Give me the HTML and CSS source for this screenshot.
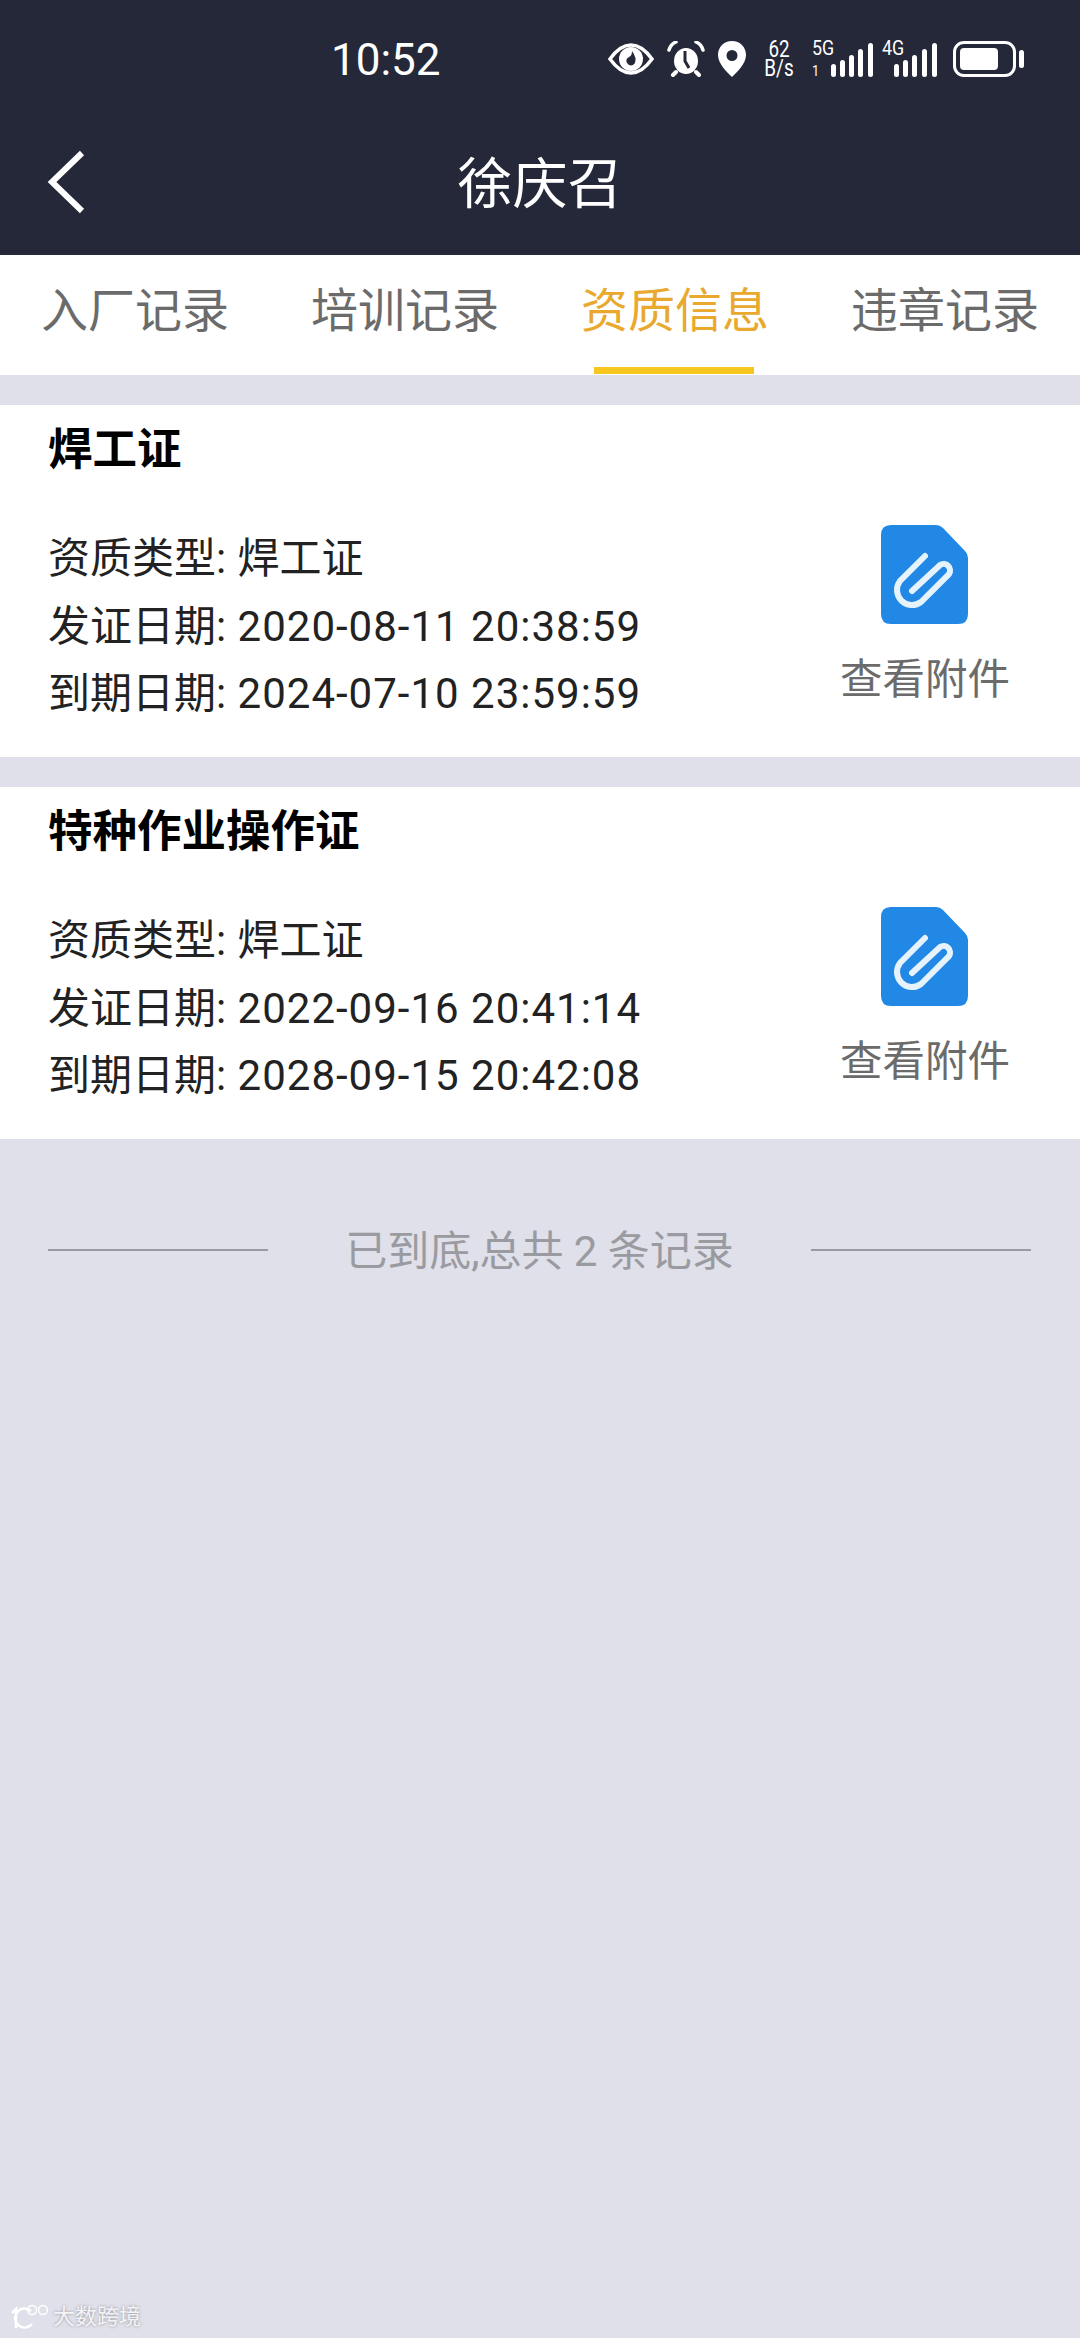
FILE: index.html
```html
<!DOCTYPE html>
<html lang="en">
<head>
    <meta charset="UTF-8">
    <title>徐庆召</title>
    <link rel="stylesheet" href="styles.css">
</head>
<body>
    <svg class="defs" width="0" height="0">
        <symbol id="doc" viewBox="0 0 87 99">
            <path d="M10 0H55Q59 0 62 3L84 26Q87 29 87 33V89Q87 99 77 99H10Q0 99 0 89V10Q0 0 10 0Z" fill="#2288e6"/>
            <path d="M44 31L19 56A15 15 0 0 0 40 77L68 49A6.500 6.500 0 0 0 59 40L31 66" fill="none" stroke="#e6f3fc" stroke-width="6" stroke-linecap="round"/>
        </symbol>
    </svg>

    <header class="header">
        <div class="status">
            <span class="time">10:52</span>
            <div class="status-icons">
                <svg class="ic-eye" width="46" height="32" viewBox="0 0 46 32">
                    <path d="M2 16Q12 2 23 2T44 16Q34 30 23 30T2 16Z" fill="none" stroke="#fff" stroke-width="3.500"/>
                    <circle cx="23" cy="16" r="12" fill="#fff"/>
                    <path d="M24 8Q29 15 27 20Q23 25 19 20Q17 16 21 14Q24 13 24 8Z" fill="#252839"/>
                </svg>
                <svg class="ic-alarm" width="38" height="36" viewBox="0 0 38 36">
                    <ellipse cx="19" cy="20" rx="12" ry="13" fill="#fff"/>
                    <path d="M18 10V20L22 27" fill="none" stroke="#252839" stroke-width="3"/>
                    <path d="M2 9Q4 3 9 1M36 9Q34 3 29 1" fill="none" stroke="#fff" stroke-width="3.500" stroke-linecap="round"/>
                    <path d="M9 31L6 34M29 31L32 34" fill="none" stroke="#fff" stroke-width="4" stroke-linecap="round"/>
                </svg>
                <svg class="ic-pin" width="28" height="36" viewBox="0 0 28 36">
                    <path fill-rule="evenodd" d="M14 0C6 0 0 6 0 14C0 23 9 31 14 36C19 31 28 23 28 14C28 6 22 0 14 0ZM14 9A5.500 5.500 0 1 1 14 20A5.500 5.500 0 0 1 14 9Z" fill="#fff"/>
                </svg>
                <div class="speed">62<br>B/s</div>
                <div class="net">
                    <div class="net-label">5G<br><span class="net-sub">1</span></div>
                    <svg width="42" height="34" viewBox="0 0 42 34">
                        <rect x="0" y="21" width="5" height="13" rx="2.500" fill="#fff"/>
                        <rect x="9" y="17" width="5" height="17" rx="2.500" fill="#fff"/>
                        <rect x="18" y="12" width="5" height="22" rx="2.500" fill="#fff"/>
                        <rect x="27" y="6" width="5" height="28" rx="2.500" fill="#fff"/>
                        <rect x="37" y="0" width="5" height="34" rx="2.500" fill="#fff"/>
                    </svg>
                </div>
                <div class="net net-4g">
                    <span class="net-top">4G</span>
                    <svg width="44" height="34" viewBox="0 0 44 34">
                        <rect x="0" y="21" width="5" height="13" rx="2.500" fill="#fff"/>
                        <rect x="9" y="17" width="5" height="17" rx="2.500" fill="#fff"/>
                        <rect x="18" y="12" width="5" height="22" rx="2.500" fill="#fff"/>
                        <rect x="28" y="6" width="5" height="28" rx="2.500" fill="#fff"/>
                        <rect x="38" y="0" width="5" height="34" rx="2.500" fill="#fff"/>
                    </svg>
                </div>
                <div class="battery"><div class="battery-fill"></div></div>
                <div class="battery-nub"></div>
            </div>
        </div>
        <div class="nav">
            <svg class="back" width="38" height="64" viewBox="0 0 38 64">
                <path d="M35 3L5 32L35 61" fill="none" stroke="#fff" stroke-width="6"/>
            </svg>
            <h1 class="title">徐庆召</h1>
        </div>
    </header>

    <nav class="tabs">
        <div class="tab">入厂记录</div>
        <div class="tab">培训记录</div>
        <div class="tab active">资质信息</div>
        <div class="tab">违章记录</div>
    </nav>

    <section class="card">
        <h2 class="card-title">焊工证</h2>
        <div class="card-body">
            <div class="rows">
                <div class="row">资质类型: 焊工证</div>
                <div class="row">发证日期: <span class="date">2020-08-11 20:38:59</span></div>
                <div class="row">到期日期: <span class="date">2024-07-10 23:59:59</span></div>
            </div>
            <div class="attach">
                <svg class="attach-icon" width="87" height="99"><use href="#doc"/></svg>
                <span>查看附件</span>
            </div>
        </div>
    </section>

    <section class="card">
        <h2 class="card-title">特种作业操作证</h2>
        <div class="card-body">
            <div class="rows">
                <div class="row">资质类型: 焊工证</div>
                <div class="row">发证日期: <span class="date">2022-09-16 20:41:14</span></div>
                <div class="row">到期日期: <span class="date">2028-09-15 20:42:08</span></div>
            </div>
            <div class="attach">
                <svg class="attach-icon" width="87" height="99"><use href="#doc"/></svg>
                <span>查看附件</span>
            </div>
        </div>
    </section>

    <div class="end">
        <div class="end-line"></div>
        <span class="end-text">已到底,总共 2 条记录</span>
        <div class="end-line"></div>
    </div>

    <div class="watermark">
        <svg width="40" height="26" viewBox="0 0 40 26">
            <path d="M2 9L6 5V24M21 7A9.500 9.500 0 1 0 22 20" fill="none" stroke="#fff" stroke-width="2.500"/>
            <circle cx="22" cy="6" r="4.500" fill="none" stroke="#fff" stroke-width="1.500"/>
            <circle cx="33" cy="6" r="4.500" fill="none" stroke="#fff" stroke-width="1.500"/>
        </svg>
        <span>大数跨境</span>
    </div>
</body>
</html>
```

FILE: styles.css
```css
* {
    box-sizing: border-box;
}
body {
    position: relative;
    margin: 0;
    width: 1080px;
    height: 2338px;
    overflow: hidden;
    background-color: #dfe0e9;
    font-family: Roboto, "Noto Sans CJK SC", sans-serif;
}
.defs {
    position: absolute;
}
.header {
    height: 255px;
    background-color: #252839;
    color: #fff;
}
.status {
    display: flex;
    align-items: center;
    height: 118px;
    padding: 0 0 0 331px;
}
.time {
    width: 277px;
    padding-top: 2px;
    font-size: 44px;
    line-height: 118px;
}
.status-icons {
    display: flex;
    align-items: center;
}
.ic-alarm {
    margin-left: 13px;
}
.ic-pin {
    margin-left: 13px;
}
.speed {
    width: 36px;
    margin-left: 15px;
    font-size: 23px;
    line-height: 19px;
    text-align: center;
    transform: scaleX(0.82);
}
.net {
    position: relative;
    display: flex;
    align-items: flex-end;
    height: 36px;
    margin-left: 15px;
}
.net-label {
    align-self: flex-start;
    width: 19px;
    height: 36px;
    margin-top: -3px;
    font-size: 21px;
    line-height: 21px;
    white-space: nowrap;
    transform: scaleX(0.85);
    transform-origin: left;
}
.net-sub {
    font-size: 15px;
}
.net-4g {
    width: 50px;
    justify-content: flex-end;
}
.net-top {
    position: absolute;
    top: -3px;
    left: -6px;
    font-size: 21px;
    line-height: 21px;
    transform: scaleX(0.85);
    transform-origin: left;
}
.battery {
    width: 63px;
    height: 36px;
    margin-left: 15px;
    padding: 4px;
    border: 3px solid #fff;
    border-radius: 11px;
}
.battery-fill {
    width: 38px;
    height: 100%;
    border-radius: 4px;
    background-color: #fff;
}
.battery-nub {
    width: 5px;
    height: 18px;
    margin-left: 3px;
    border-radius: 3px;
    background-color: #fff;
}
.nav {
    position: relative;
    display: flex;
    align-items: center;
    justify-content: center;
    height: 125px;
    padding-bottom: 3px;
}
.back {
    position: absolute;
    left: 47px;
    top: 32px;
}
.title {
    margin: 0;
    font-size: 55px;
    font-weight: 400;
}
.tabs {
    display: grid;
    grid-template-columns: repeat(4, 270px);
    height: 120px;
    margin-bottom: 30px;
    background-color: #fff;
}
.tab {
    height: 120px;
    padding-top: 24px;
    color: #6b6b6b;
    font-size: 47px;
    line-height: 64px;
    text-align: center;
}
.active {
    position: relative;
    color: #e8a92e;
}
.active::after {
    content: "";
    position: absolute;
    left: 54px;
    bottom: 1px;
    width: 160px;
    height: 7px;
    background-color: #f7c71f;
}
.card {
    height: 352px;
    margin-bottom: 30px;
    padding: 20px 70px 0 48px;
    background-color: #fff;
}
.card-title {
    margin: 0;
    height: 50px;
    color: #000;
    font-size: 44.500px;
    line-height: 50px;
    font-weight: 700;
}
.card-body {
    display: flex;
    justify-content: space-between;
    margin-top: 50px;
}
.row {
    color: #222;
    font-size: 42px;
    line-height: 67.5px;
    white-space: nowrap;
    word-spacing: 1px;
}
.date {
    letter-spacing: 1px;
    word-spacing: 0;
}
.attach {
    display: flex;
    flex-direction: column;
    align-items: center;
    width: 170px;
    color: #6b6b6b;
    font-size: 42.5px;
    line-height: 60px;
    white-space: nowrap;
}
.attach-icon {
    margin-bottom: 26px;
    margin-left: -2px;
}
.end {
    display: flex;
    align-items: center;
    justify-content: space-between;
    height: 80px;
    margin-top: 71px;
    padding: 0 49px 0 48px;
    color: #9a9ba0;
    font-size: 42px;
}
.end-text {
    margin-bottom: 6px;
}
.end-line {
    width: 220px;
    height: 2px;
    background-color: #9a9ba0;
}
.watermark {
    position: absolute;
    left: 10px;
    bottom: 8px;
    display: flex;
    align-items: center;
    gap: 3px;
    color: #f4f4f6;
    font-size: 22px;
    line-height: 26px;
    text-shadow: 0 0 3px #8f8f96;
}
```
